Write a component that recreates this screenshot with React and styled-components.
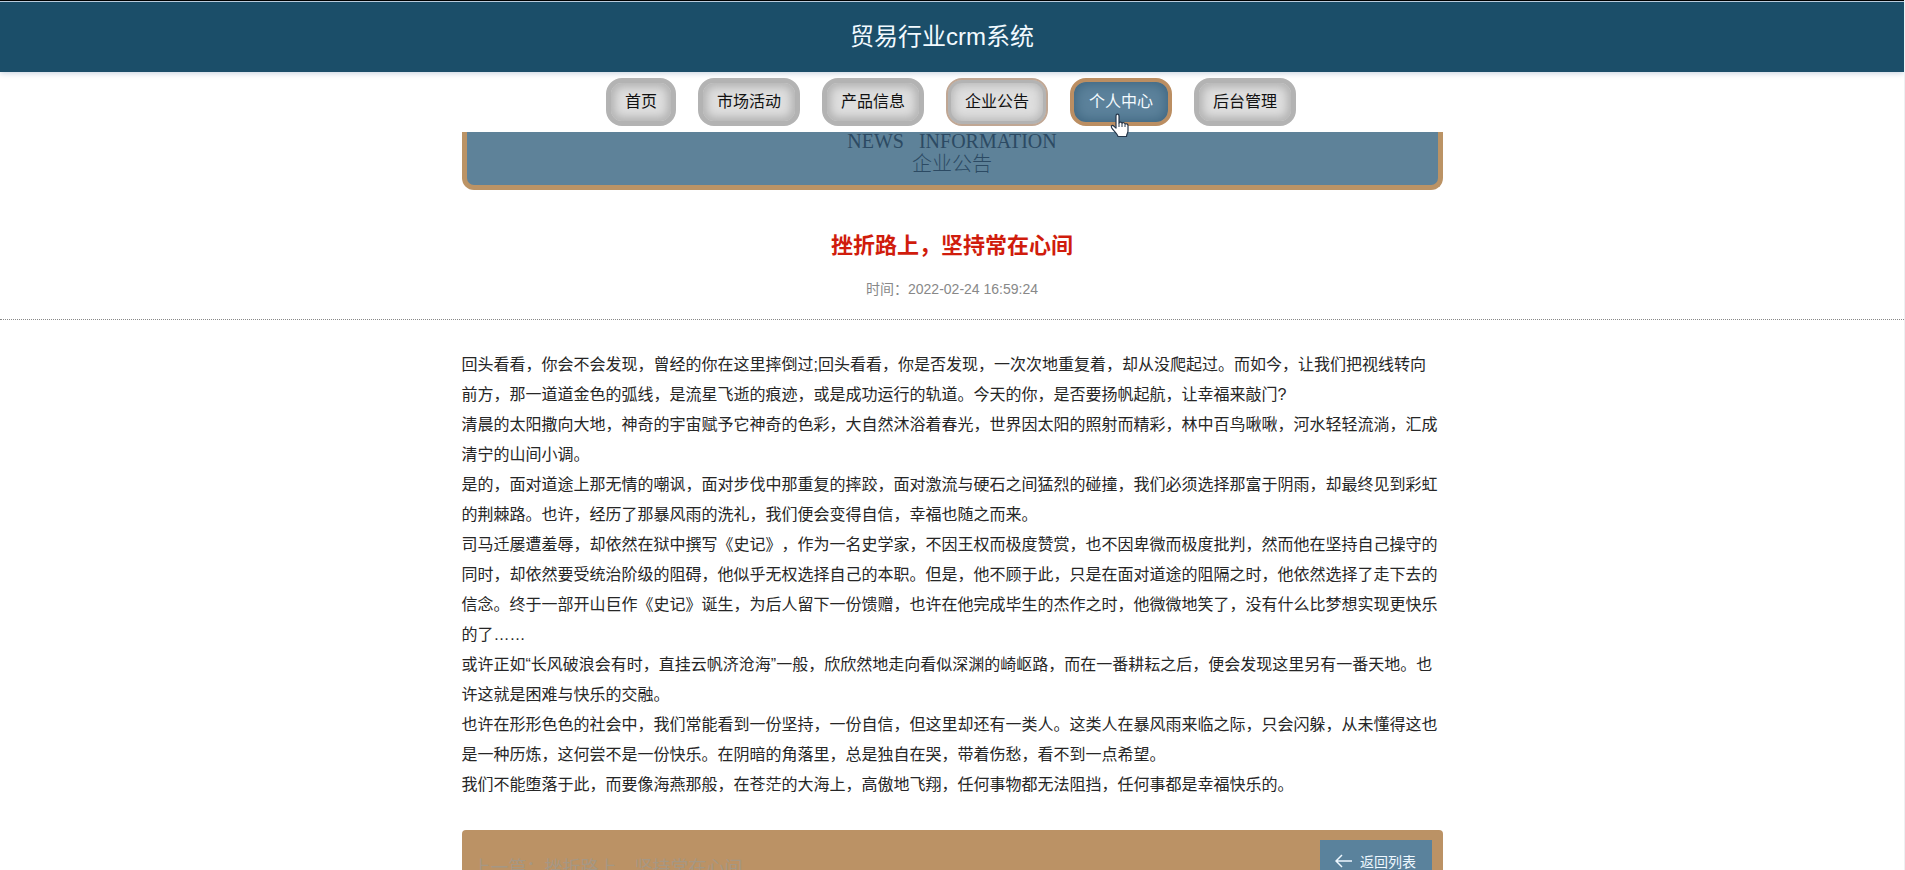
import React from "react";
import styled, { createGlobalStyle, css } from "styled-components";

const GlobalStyle = createGlobalStyle`
  * { box-sizing: border-box; }
  body {
    margin: 0;
    overflow: hidden;
    background: #fff;
    color: #262626;
    font-family: "Liberation Sans", "Noto Sans CJK SC", sans-serif;
    font-size: 16px;
    text-spacing-trim: space-all;
  }
  h1, h2, p { margin: 0; }
  a { color: inherit; text-decoration: none; }
`;

const Page = styled.div`
  height: 100vh;
  overflow: hidden;
  border-right: 1px solid #eef0f2;
`;

const Header = styled.header`
  position: relative;
  height: 72px;
  padding-right: 20px;
  display: flex;
  align-items: center;
  justify-content: center;
  border-top: 1px solid #000;
  background: #1b4e69;
  box-shadow: inset 0 1px 0 #b9cbdc, 0 1px 6px #c3d0de;
`;

const SystemName = styled.h1`
  color: #f2faff;
  font-size: 24px;
  font-weight: 400;
  line-height: 36px;
`;

const Nav = styled.nav`
  height: 60px;
  padding: 6px 2px 0 0;
  display: flex;
  align-items: flex-start;
  justify-content: center;
  gap: 22px;
`;

const navTones = {
  plain: css`
    border: 5px solid #b3b3b3;
    background: #dedede;
    box-shadow: inset 0 0 9px 4px #b3b3b3;
  `,
  fading: css`
    border: 2px solid #c0a794;
    padding: 0 17px;
    background: #dedede;
    box-shadow: inset 0 0 0 3px #b3b3b3, inset 0 0 10px 5px #b5b5b5;
  `,
  hovered: css`
    border: 4px solid #bb8e62;
    padding: 0 15px;
    background: #5c829b;
    color: #f4fbff;
    box-shadow: inset 0 0 12px 2px #3f6680;
  `,
};

const NavLink = styled.a`
  position: relative;
  height: 48px;
  padding: 0 14px;
  display: flex;
  align-items: center;
  border-radius: 16px;
  color: #111;
  line-height: 24px;
  ${({ $tone }) => navTones[$tone]}
`;

const Pointer = styled.svg`
  position: absolute;
  left: 36px;
  top: 31px;
  z-index: 2;
`;

const Column = styled.div`
  width: 100%;
  max-width: 981px;
  margin: 0 auto;
`;

const Banner = styled.section`
  height: 58px;
  border: 5px solid #bb9365;
  border-top: 0;
  border-radius: 0 0 12px 12px;
  background: #5e8299;
  color: #2c4a63;
  font-family: "Liberation Serif", "Noto Sans CJK SC", serif;
  font-size: 20px;
  font-weight: 300;
  text-align: center;
  overflow: hidden;
`;

const BannerEnglish = styled.p`
  line-height: 18px;
`;

const BannerChinese = styled.p`
  line-height: 28px;
`;

const ArticleHead = styled.div`
  height: 130px;
  padding-top: 41px;
  border-bottom: 1px dotted #888;
  text-align: center;
`;

const Title = styled.h2`
  color: #d01c0c;
  font-size: 22px;
  font-weight: 700;
  line-height: 30px;
`;

const PublishTime = styled.p`
  margin-top: 17px;
  color: #888;
  font-size: 14px;
  line-height: 22px;
`;

const Article = styled.article`
  padding: 30px 4px 30px 0;
  line-height: 30px;
`;

const Footer = styled.div`
  height: 64px;
  padding: 10px 11px;
  display: flex;
  justify-content: space-between;
  border-radius: 4px;
  background: #bb9265;
`;

const Previous = styled.a`
  padding-top: 16px;
  color: #a59784;
  font-size: 18px;
  line-height: 24px;
`;

const BackButton = styled.button`
  width: 112px;
  height: 42px;
  padding: 0;
  display: flex;
  align-items: center;
  justify-content: center;
  gap: 8px;
  border: 0;
  background: #5a829c;
  color: #eef8ff;
  font: inherit;
  font-size: 14px;
`;

const navItems = [
  ["首页", "plain"],
  ["市场活动", "plain"],
  ["产品信息", "plain"],
  ["企业公告", "fading"],
  ["个人中心", "hovered"],
  ["后台管理", "plain"],
];

const paragraphs = [
  "回头看看，你会不会发现，曾经的你在这里摔倒过;回头看看，你是否发现，一次次地重复着，却从没爬起过。而如今，让我们把视线转向前方，那一道道金色的弧线，是流星飞逝的痕迹，或是成功运行的轨道。今天的你，是否要扬帆起航，让幸福来敲门?",
  "清晨的太阳撒向大地，神奇的宇宙赋予它神奇的色彩，大自然沐浴着春光，世界因太阳的照射而精彩，林中百鸟啾啾，河水轻轻流淌，汇成清宁的山间小调。",
  "是的，面对道途上那无情的嘲讽，面对步伐中那重复的摔跤，面对激流与硬石之间猛烈的碰撞，我们必须选择那富于阴雨，却最终见到彩虹的荆棘路。也许，经历了那暴风雨的洗礼，我们便会变得自信，幸福也随之而来。",
  "司马迁屡遭羞辱，却依然在狱中撰写《史记》，作为一名史学家，不因王权而极度赞赏，也不因卑微而极度批判，然而他在坚持自己操守的同时，却依然要受统治阶级的阻碍，他似乎无权选择自己的本职。但是，他不顾于此，只是在面对道途的阻隔之时，他依然选择了走下去的信念。终于一部开山巨作《史记》诞生，为后人留下一份馈赠，也许在他完成毕生的杰作之时，他微微地笑了，没有什么比梦想实现更快乐的了……",
  "或许正如“长风破浪会有时，直挂云帆济沧海”一般，欣欣然地走向看似深渊的崎岖路，而在一番耕耘之后，便会发现这里另有一番天地。也许这就是困难与快乐的交融。",
  "也许在形形色色的社会中，我们常能看到一份坚持，一份自信，但这里却还有一类人。这类人在暴风雨来临之际，只会闪躲，从未懂得这也是一种历炼，这何尝不是一份快乐。在阴暗的角落里，总是独自在哭，带着伤愁，看不到一点希望。",
  "我们不能堕落于此，而要像海燕那般，在苍茫的大海上，高傲地飞翔，任何事物都无法阻挡，任何事都是幸福快乐的。",
];

function HandPointer() {
  return (
    <Pointer width="20" height="26" viewBox="0 0 20 26" aria-hidden="true">
      <path
        d="M6 15V3c0-2.400 3-2.400 3 0v7c.5-1.500 3-1.200 3 .5.600-1.300 3-.9 3 .8.700-1 3-.5 3 1.200V18c0 2-1.500 3-1.500 5.500H8C7.500 20.500 3 17.500 1.500 14.500c-.8-1.800 1-2.700 2.200-1.500z"
        fill="#fff"
        stroke="#25364a"
        strokeWidth="1.200"
        strokeLinejoin="round"
      />
      <path d="M9 10v4M12 11v3M15 12v2" stroke="#25364a" strokeWidth="1" />
    </Pointer>
  );
}

export default function App() {
  return (
    <>
      <GlobalStyle />
      <Page>
        <Header>
          <SystemName>贸易行业crm系统</SystemName>
        </Header>
        <Nav>
          {navItems.map(([label, tone]) => (
            <NavLink key={label} href="#" $tone={tone}>
              {label}
              {tone === "hovered" && <HandPointer />}
            </NavLink>
          ))}
        </Nav>
        <main>
          <Column>
            <Banner>
              <BannerEnglish>{"NEWS\u00a0\u00a0\u00a0INFORMATION"}</BannerEnglish>
              <BannerChinese>企业公告</BannerChinese>
            </Banner>
          </Column>
          <ArticleHead>
            <Title>挫折路上，坚持常在心间</Title>
            <PublishTime>时间：2022-02-24 16:59:24</PublishTime>
          </ArticleHead>
          <Column>
            <Article>
              {paragraphs.map((text) => (
                <p key={text}>{text}</p>
              ))}
            </Article>
            <Footer>
              <Previous href="#">上一篇：挫折路上，坚持常在心间</Previous>
              <BackButton type="button">
                <svg width="17" height="14" viewBox="0 0 17 14" fill="none" stroke="currentColor" strokeWidth="1.500" aria-hidden="true">
                  <path d="M17 7H1M7 1L1 7l6 6" />
                </svg>
                返回列表
              </BackButton>
            </Footer>
          </Column>
        </main>
      </Page>
    </>
  );
}
